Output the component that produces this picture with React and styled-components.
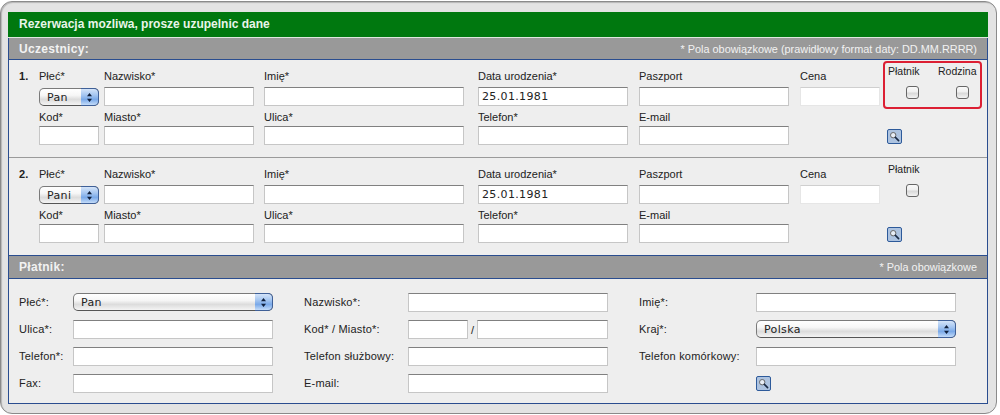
import React from "react";
import styled, { createGlobalStyle } from "styled-components";

const Global = createGlobalStyle`
  html, body { margin: 0; padding: 0; background: #fff; }
  body { font-family: "Liberation Sans", Arial, sans-serif; font-size: 11px; color: #222; }
`;

const Frame = styled.div`
  box-sizing: border-box;
  width: 997px;
  height: 413px;
  margin: 1px 0 0 0;
  padding: 10px 8px 9px 7px;
  background: #e3e3e3;
  border: 1px solid #8a8a8a;
  border-radius: 12px;
  box-shadow: inset 1px 1px 1px #b5b5b5;
`;

const Title = styled.h1`
  margin: 0;
  height: 25px;
  padding-left: 11px;
  background: #00780f;
  border-bottom: 1px solid #dfe8df;
  color: #e9f5e9;
  font-size: 12px;
  font-weight: bold;
  line-height: 25px;
`;

const Section = styled.section`
  border: 1px solid #2a4d8f;
  border-top: 0;
  background: #eeeeee;
`;

const SectionBar = styled.div`
  display: flex;
  justify-content: space-between;
  align-items: center;
  box-sizing: border-box;
  height: ${(p) => p.$h}px;
  padding: 0 10px;
  background: #999999;
  border-bottom: 1px solid #2a4d8f;
  border-top: ${(p) => (p.$top ? "1px solid #2a4d8f" : "0")};
  color: #f2f2f2;
`;

const BarTitle = styled.h2`
  margin: 0;
  font-size: 12px;
  font-weight: bold;
  letter-spacing: 0.3px;
`;

const BarNote = styled.span`
  font-size: 10.9px;
`;

const Participant = styled.div`
  display: grid;
  grid-template-columns: 20px 65px 160px 214px 161px 161px 84px 98px;
  grid-template-rows: 18px 23px 16px 20px;
  height: ${(p) => p.$h}px;
  box-sizing: border-box;
  padding: 9px 0 0 10px;
  border-bottom: ${(p) => (p.$divider ? "1px solid #9a9a9a" : "0")};
`;

const Num = styled.b`
  font-size: 11px;
  line-height: 14px;
`;

const FieldLabel = styled.label`
  display: block;
  line-height: 14px;
  font-size: 11px;
`;

const Stack = styled.div`
  grid-row: ${(p) => p.$row};
  grid-column: ${(p) => p.$col};
`;

const TextBox = styled.input`
  display: block;
  box-sizing: border-box;
  width: ${(p) => p.$w}px;
  height: 19px;
  padding: 1px 3px;
  margin: 0;
  background: #fff;
  border: 1px solid ${(p) => (p.$soft ? "#e6e6e6" : "#c6c6c6")};
  border-top-color: ${(p) => (p.$soft ? "#cfcfcf" : "#808080")};
  border-radius: 0;
  outline: 0;
  font-family: "DejaVu Sans", sans-serif;
  font-size: 11px;
  letter-spacing: 0.35px;
  color: #222;
`;

const SelectWrap = styled.div`
  position: relative;
  width: ${(p) => p.$w}px;
  height: 18px;
  margin-top: ${(p) => p.$mt || 0}px;
`;

const SelectBox = styled.select`
  appearance: none;
  display: block;
  box-sizing: border-box;
  width: 100%;
  height: 18px;
  margin: 0;
  padding: 0 20px 0 ${(p) => p.$pad}px;
  border: 1px solid #7a7a7a;
  border-bottom-color: #555;
  border-radius: 5px;
  outline: 0;
  background: linear-gradient(#ffffff 0%, #f6f6f6 40%, #dcdcdc 65%, #f4f4f4 100%);
  font-family: "DejaVu Sans", sans-serif;
  font-size: 11px;
  letter-spacing: 0.35px;
  color: #222;
`;

const Stepper = styled.span`
  position: absolute;
  top: 0;
  right: 0;
  box-sizing: border-box;
  width: 18px;
  height: 18px;
  display: flex;
  align-items: center;
  justify-content: center;
  border: 1px solid #3f6098;
  border-left: 0;
  border-radius: 0 5px 5px 0;
  background: linear-gradient(#d4e4f9 0%, #a2c4f0 40%, #7aa9e8 65%, #c4dcf9 100%);
  pointer-events: none;
`;

const Picker = ({ w, pad = 7, value, mt }) => (
  <SelectWrap $w={w} $mt={mt}>
    <SelectBox $pad={pad} defaultValue={value}>
      <option>{value}</option>
    </SelectBox>
    <Stepper>
      <svg width="7" height="11" viewBox="0 0 7 11">
        <path d="M3.5 1 L6 4.3 H1 Z M3.5 10 L1 6.7 H6 Z" fill="#10203c" />
      </svg>
    </Stepper>
  </SelectWrap>
);

const Lookup = styled.button`
  display: flex;
  align-items: center;
  justify-content: center;
  box-sizing: border-box;
  width: 15px;
  height: 15px;
  padding: 0;
  margin-top: ${(p) => p.$mt || 0}px;
  background: #adc3e0;
  border: 1px solid #2d5a9a;
  border-radius: 2px;
`;

const Magnifier = ({ mt }) => (
  <Lookup type="button" aria-label="Szukaj" $mt={mt}>
    <svg width="11" height="11" viewBox="0 0 11 11" fill="none">
      <circle cx="4.2" cy="4.2" r="2.7" fill="#e8eef6" stroke="#666" strokeWidth="1" />
      <path d="M6.4 6.4 L9.6 9.6" stroke="#1a2a44" strokeWidth="1.6" strokeLinecap="round" />
    </svg>
  </Lookup>
);

const ChoiceBox = styled.div`
  grid-row: 1 / span 2;
  grid-column: 8;
  box-sizing: border-box;
  width: 99px;
  height: ${(p) => (p.$marked ? 48 : 40)}px;
  margin-top: ${(p) => (p.$marked ? -8 : -7)}px;
  margin-left: -1px;
  padding: ${(p) => (p.$marked ? "1px 2px 0 3px" : "0 2px 0 3px")};
  display: flex;
  justify-content: space-between;
  border: 2px solid ${(p) => (p.$marked ? "#dc1f33" : "transparent")};
  border-radius: 4px;
`;

const Choice = styled.label`
  display: flex;
  flex-direction: column;
  align-items: flex-start;
  gap: 8px;
  line-height: 14px;
  font-size: 10.5px;
  width: ${(p) => p.$w}px;
`;

const Tick = styled.input`
  appearance: none;
  display: block;
  width: 13px;
  height: 13px;
  margin: 0 0 0 18px;
  border: 1px solid #666;
  border-radius: 3px;
  background: linear-gradient(#fafafa 0%, #efefef 45%, #d8d8d8 55%, #f2f2f2 100%);
`;

const LookupCell = styled.div`
  grid-row: 4;
  grid-column: 8;
  padding: 3px 0 0 3px;
`;

const PayerGrid = styled.div`
  display: grid;
  grid-template-columns: 54px 231px 104px 231px 117px 200px;
  grid-auto-rows: 27px;
  height: 124px;
  box-sizing: border-box;
  padding: 14px 0 0 10px;
  align-items: start;
`;

const PayerLabel = styled.label`
  line-height: 19px;
  font-size: 11px;
  letter-spacing: 0.2px;
`;

const PostWrap = styled.div`
  display: flex;
  align-items: center;
  width: 200px;
  gap: 3px;
`;

const Slash = styled.span`
  width: 6px;
  text-align: center;
`;

const blank = "";

const ParticipantRow = ({ n, sex, last, marked, height }) => (
  <Participant $h={height} $divider={!last}>
    <Stack $row="1" $col="1"><Num>{n}.</Num></Stack>
    <Stack $row="1" $col="2"><FieldLabel>Płeć*</FieldLabel></Stack>
    <Stack $row="2" $col="2"><Picker w={60} value={sex} mt={1} /></Stack>
    <Stack $row="1" $col="3"><FieldLabel>Nazwisko*</FieldLabel></Stack>
    <Stack $row="2" $col="3"><TextBox $w={150} defaultValue={blank} /></Stack>
    <Stack $row="1" $col="4"><FieldLabel>Imię*</FieldLabel></Stack>
    <Stack $row="2" $col="4"><TextBox $w={200} defaultValue={blank} /></Stack>
    <Stack $row="1" $col="5"><FieldLabel>Data urodzenia*</FieldLabel></Stack>
    <Stack $row="2" $col="5"><TextBox $w={150} defaultValue="25.01.1981" /></Stack>
    <Stack $row="1" $col="6"><FieldLabel>Paszport</FieldLabel></Stack>
    <Stack $row="2" $col="6"><TextBox $w={150} defaultValue={blank} /></Stack>
    <Stack $row="1" $col="7"><FieldLabel>Cena</FieldLabel></Stack>
    <Stack $row="2" $col="7"><TextBox $w={80} $soft readOnly defaultValue={blank} /></Stack>
    <ChoiceBox $marked={marked}>
      <Choice $w={50}>Płatnik<Tick type="checkbox" /></Choice>
      {marked && <Choice $w={40}>Rodzina<Tick type="checkbox" /></Choice>}
    </ChoiceBox>
    <Stack $row="3" $col="2"><FieldLabel>Kod*</FieldLabel></Stack>
    <Stack $row="4" $col="2"><TextBox $w={60} defaultValue={blank} /></Stack>
    <Stack $row="3" $col="3"><FieldLabel>Miasto*</FieldLabel></Stack>
    <Stack $row="4" $col="3"><TextBox $w={150} defaultValue={blank} /></Stack>
    <Stack $row="3" $col="4"><FieldLabel>Ulica*</FieldLabel></Stack>
    <Stack $row="4" $col="4"><TextBox $w={200} defaultValue={blank} /></Stack>
    <Stack $row="3" $col="5"><FieldLabel>Telefon*</FieldLabel></Stack>
    <Stack $row="4" $col="5"><TextBox $w={150} defaultValue={blank} /></Stack>
    <Stack $row="3" $col="6"><FieldLabel>E-mail</FieldLabel></Stack>
    <Stack $row="4" $col="6"><TextBox $w={150} defaultValue={blank} /></Stack>
    <LookupCell><Magnifier /></LookupCell>
  </Participant>
);

export default function App() {
  return (
    <>
      <Global />
      <Frame>
        <Title>Rezerwacja mozliwa, prosze uzupelnic dane</Title>
        <Section>
          <SectionBar $h={22}>
            <BarTitle>Uczestnicy:</BarTitle>
            <BarNote>* Pola obowiązkowe (prawidłowy format daty: DD.MM.RRRR)</BarNote>
          </SectionBar>
          <ParticipantRow n={1} sex="Pan" marked height={98} />
          <ParticipantRow n={2} sex="Pani" last height={97} />
          <SectionBar $h={24} $top>
            <BarTitle>Płatnik:</BarTitle>
            <BarNote>* Pola obowiązkowe</BarNote>
          </SectionBar>
          <PayerGrid>
            <PayerLabel>Płeć*:</PayerLabel>
            <Picker w={200} value="Pan" />
            <PayerLabel>Nazwisko*:</PayerLabel>
            <TextBox $w={200} defaultValue={blank} />
            <PayerLabel>Imię*:</PayerLabel>
            <TextBox $w={200} defaultValue={blank} />

            <PayerLabel>Ulica*:</PayerLabel>
            <TextBox $w={200} defaultValue={blank} />
            <PayerLabel>Kod* / Miasto*:</PayerLabel>
            <PostWrap>
              <TextBox $w={60} defaultValue={blank} />
              <Slash>/</Slash>
              <TextBox $w={131} defaultValue={blank} />
            </PostWrap>
            <PayerLabel>Kraj*:</PayerLabel>
            <Picker w={200} value="Polska" />

            <PayerLabel>Telefon*:</PayerLabel>
            <TextBox $w={200} defaultValue={blank} />
            <PayerLabel>Telefon służbowy:</PayerLabel>
            <TextBox $w={200} defaultValue={blank} />
            <PayerLabel>Telefon komórkowy:</PayerLabel>
            <TextBox $w={200} defaultValue={blank} />

            <PayerLabel>Fax:</PayerLabel>
            <TextBox $w={200} defaultValue={blank} />
            <PayerLabel>E-mail:</PayerLabel>
            <TextBox $w={200} defaultValue={blank} />
            <span />
            <Magnifier mt={2} />
          </PayerGrid>
        </Section>
      </Frame>
    </>
  );
}
